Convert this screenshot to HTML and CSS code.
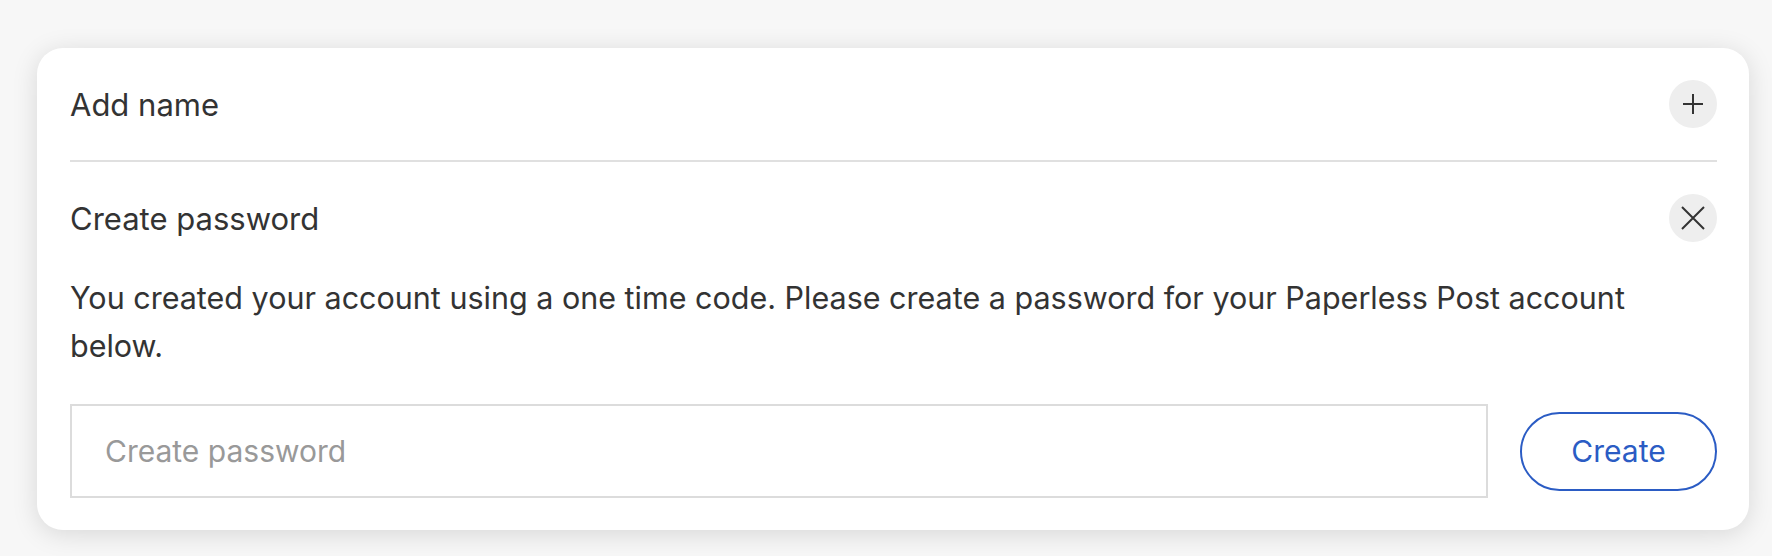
FILE: index.html
```html
<!DOCTYPE html>
<html lang="en">
<head>
  <meta charset="UTF-8">
  <title>Account settings</title>
  <meta name="viewport" content="width=device-width, initial-scale=1.0">
  <link rel="stylesheet" href="styles.css">
</head>
<body>

<div class="card">
  <div class="section-row">
    <h2 class="section-title">Add name</h2>
    <button class="icon-btn" aria-label="Add name">
      <svg width="22" height="22" viewBox="0 0 22 22"><path d="M11 1v20M1 11h20" stroke="#333" stroke-width="2" fill="none"/></svg>
    </button>
  </div>

  <hr class="divider">

  <div class="section-row">
    <h2 class="section-title">Create password</h2>
    <button class="icon-btn" aria-label="Close">
      <svg width="24" height="24" viewBox="0 0 24 24"><path d="M1 1l22 22M23 1L1 23" stroke="#333" stroke-width="2" fill="none"/></svg>
    </button>
  </div>

  <p class="note">You created your account using a one time code. Please create a password for your Paperless Post account below.</p>

  <form class="password-form">
    <input type="password" class="password-input" placeholder="Create password">
    <button type="button" class="create-btn">Create</button>
  </form>
</div>

</body>
</html>
```

FILE: styles.css
```css
body {
  margin: 0;
  padding: 48px 23px 26px 37px;
  background: #f7f7f7;
  font-family: Inter, 'Liberation Sans', sans-serif;
  color: #333;
}
.card {
  background: #fff;
  border-radius: 26px;
  box-shadow: 0 4px 26px rgba(0,0,0,0.13);
  padding: 32px 32px 32px 33px;
}
.section-row {
  display: flex;
  align-items: center;
  justify-content: space-between;
  height: 48px;
}
.section-title {
  margin: 0;
  font-size: 31px;
  font-weight: 400;
  color: #333;
}
.icon-btn {
  width: 48px;
  height: 48px;
  border: none;
  border-radius: 50%;
  background: #eee;
  display: flex;
  align-items: center;
  justify-content: center;
  padding: 0;
}
.divider {
  border: none;
  border-top: 2px solid #e0e0e0;
  margin: 32px 0 32px;
}
.note {
  max-width: 1610px;
  margin: 32px 0 34px;
  font-size: 30.5px;
  line-height: 48px;
}
.password-form {
  display: flex;
  align-items: center;
  gap: 32px;
}
.password-input {
  flex: 1;
  height: 94px;
  box-sizing: border-box;
  border: 2px solid #dcdcdc;
  padding: 0 33px;
  font-family: inherit;
  font-size: 30px;
  color: #333;
  outline: none;
}
.password-input::placeholder {
  color: #999;
}
.create-btn {
  width: 197px;
  height: 79px;
  border: 2px solid #2b5cc4;
  border-radius: 40px;
  background: #fff;
  color: #2b5cc4;
  font-family: inherit;
  font-size: 30px;
}
```
